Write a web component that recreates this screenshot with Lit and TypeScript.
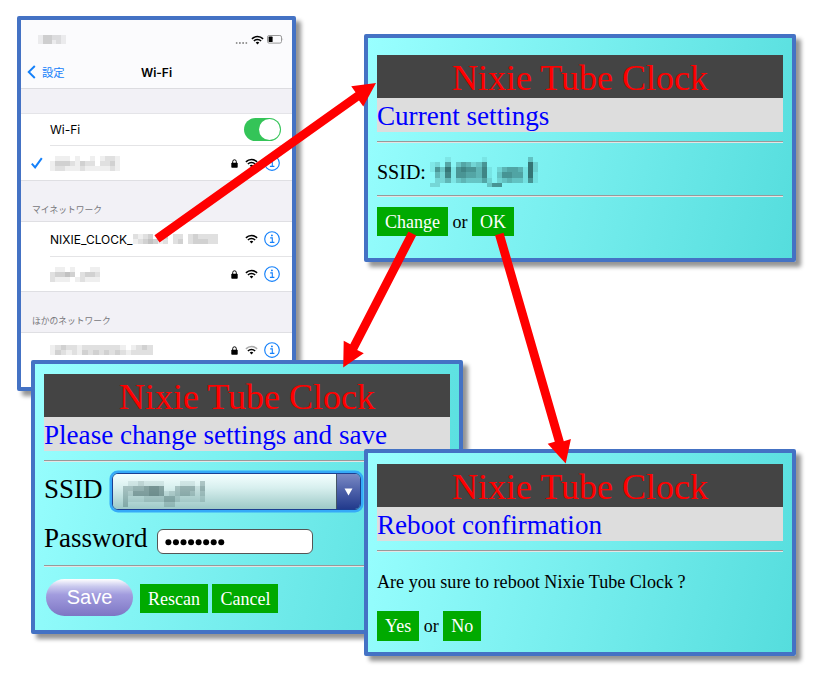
import { LitElement, html, svg, css } from "lit";
import { customElement, property } from "lit/decorators.js";

type Pt = [number, number];

/** Censored text: a grid of translucent cells, one digit (0-9) per cell. */
@customElement("mosaic-text")
class MosaicText extends LitElement {
  @property({ type: Array }) rows: string[] = [];
  @property({ type: Number }) cell = 5;
  @property() tone = "#666";
  static styles = css`
    :host { display: block; }
    svg { display: block; filter: blur(0.4px); }
  `;
  render() {
    const c = this.cell;
    const w = Math.max(...this.rows.map((r) => r.length)) * c;
    const h = this.rows.length * c;
    return html`<svg width=${w} height=${h} shape-rendering="crispEdges" fill=${this.tone}>
      ${this.rows.map((r, y) =>
        [...r].map((d, x) =>
          d === "0" || d === " "
            ? null
            : svg`<rect x=${x * c} y=${y * c} width=${c} height=${c} opacity=${Number(d) / 10}></rect>`
        )
      )}
    </svg>`;
  }
}

const wifi = (weak = false) => html`<svg class="wifi" width="13" height="10" viewBox="0 0 13 10" fill="none" stroke="#000" stroke-width="1.5">
  <path d="M0.9 3.9 A8 8 0 0 1 12.1 3.9" stroke=${weak ? "#aaa" : "#000"}></path>
  <path d="M2.9 6 A5.1 5.1 0 0 1 10.1 6"></path>
  <path d="M4.7 7.6 A2.6 2.6 0 0 1 8.3 7.6 L6.5 9.5 Z" fill="#000" stroke="none"></path>
</svg>`;

const lock = html`<svg class="lock" width="7" height="9" viewBox="0 0 7 9">
  <rect x="0.3" y="3.7" width="6.4" height="5" rx="0.8"></rect>
  <path d="M1.7 4.2 V2.6 A1.8 1.8 0 0 1 5.3 2.6 V4.2" fill="none" stroke="#000" stroke-width="1"></path>
</svg>`;

const info = html`<svg class="info" width="16" height="16" viewBox="0 0 16 16" fill="none" stroke="#1480fa">
  <circle cx="8" cy="8" r="7.3" stroke-width="1.15"></circle>
  <circle cx="7.9" cy="4.4" r="0.95" fill="#1480fa" stroke="none"></circle>
  <path d="M6.2 6.9 H8.3 V11.4 M5.9 11.4 H10.4" stroke-width="1.1"></path>
</svg>`;

@customElement("wifi-phone")
class WifiPhone extends LitElement {
  static styles = css`
    :host { display: flex; flex-direction: column; height: 100%; overflow: hidden; background: #fff; color: #000;
      font-family: Inter, "Noto Sans CJK JP", sans-serif; font-size: 12px; }
    :host > * { flex: none; }
    .top { background: #fbfbfd; border-bottom: 1px solid #dcdce0; height: 68px; box-sizing: content-box; }
    .status { height: 39px; display: flex; align-items: center; padding: 0 8px 0 17px; }
    .dots { margin-left: auto; width: 13px; height: 2px; margin-top: 7px; margin-right: 3px;
      background: radial-gradient(circle, #999 0.8px, transparent 1.1px) 0 0 / 3.25px 2px; }
    .battery { margin-left: 3px; }
    .nav { display: grid; grid-template-columns: 1fr auto 1fr; align-items: center; height: 26px; padding: 0 6px; }
    .back { display: flex; align-items: center; gap: 6px; color: #1480fa; font-size: 11.3px; }
    .title { font-weight: 600; font-size: 12px; }
    .gap { height: 24px; background: #f2f1f6; border-bottom: 1px solid #e4e4e8; }
    .section { height: 42px; background: #f2f1f6; border-top: 1px solid #dfdfe3; border-bottom: 1px solid #dfdfe3;
      box-sizing: border-box; padding: 17px 0 0 11px; font-size: 8.75px; line-height: 24px; color: #77777b; }
    .row { display: flex; align-items: center; height: 34px; box-sizing: border-box; padding-right: 12px; }
    .first { height: 31px; padding-right: 11px; }
    .mark { width: 29px; display: flex; padding-left: 10px; box-sizing: border-box; flex: none; }
    .mark svg { flex: none; }
    .line { height: 1px; margin-left: 29px; background: #e4e4e6; }
    .end { margin-left: auto; display: flex; align-items: center; }
    .lock { margin-right: 7px; }
    .info { margin-left: 6px; }
    .wifi { display: block; }
    .toggle { width: 37px; height: 23px; border-radius: 12px; background: #34c458; margin-left: auto; display: flex;
      justify-content: flex-end; padding: 1px; box-sizing: border-box; }
    .knob { width: 21px; height: 21px; border-radius: 50%; background: #fff; }
  `;
  render() {
    return html`
      <div class="top">
        <div class="status">
          <mosaic-text .cell=${4.6} .rows=${["133221", "133121"]}></mosaic-text>
          <span class="dots"></span>${wifi()}
          <svg class="battery" width="17" height="9" viewBox="0 0 17 9">
            <rect x="0.5" y="0.5" width="14" height="7.6" rx="1.6" fill="none" stroke="#999"></rect>
            <rect x="1.6" y="1.6" width="4" height="5.4" rx="0.6"></rect>
            <path d="M15.6 3 Q16.8 4.3 15.6 5.6 Z" fill="#999"></path>
          </svg>
        </div>
        <div class="nav">
          <span class="back"><svg width="9" height="14" viewBox="0 0 9 14" fill="none" stroke="#1480fa" stroke-width="1.9"><path d="M7.8 1 L1.7 7 L7.8 13"></path></svg>設定</span>
          <span class="title">Wi-Fi</span>
        </div>
      </div>
      <div class="gap"></div>
      <div class="row first"><span class="mark"></span>Wi-Fi<span class="toggle"><span class="knob"></span></span></div>
      <div class="line"></div>
      <div class="row"><span class="mark"><svg width="12" height="12" viewBox="0 0 12 12" fill="none" stroke="#1480fa" stroke-width="2"><path d="M0.8 6.6 L4.1 10.4 L10.8 1.2"></path></svg></span>
        <mosaic-text .cell=${5} .rows=${["01110100101221", "13332132202231", "12211121111121"]}></mosaic-text>
        <span class="end">${lock}${wifi()}${info}</span></div>
      <div class="section">マイネットワーク</div>
      <div class="row"><span class="mark"></span>NIXIE_CLOCK_
        <mosaic-text .cell=${5} .rows=${["212301302202322220", "123431202302333220"]}></mosaic-text>
        <span class="end">${wifi()}${info}</span></div>
      <div class="line"></div>
      <div class="row"><span class="mark"></span>
        <mosaic-text .cell=${5} .rows=${["0110100011", "2334302332", "2111012111"]}></mosaic-text>
        <span class="end">${lock}${wifi()}${info}</span></div>
      <div class="section">ほかのネットワーク</div>
      <div class="row"><span class="mark"></span>
        <mosaic-text .cell=${5.4} .rows=${["12322122222221012320", "13212132323232122220"]}></mosaic-text>
        <span class="end">${lock}${wifi(true)}${info}</span></div>
    `;
  }
}

const pageStyles = css`
  :host { display: block; height: 100%; box-sizing: border-box; padding: 0 9px;
    background: linear-gradient(104deg, #9ff 0%, #5dd 100%);
    font-family: "Liberation Serif", serif; color: #000; font-size: 18px; }
  .head { height: 43px; line-height: 46px; background: #444; color: #f00; font-size: 36px; text-align: center; white-space: nowrap; }
  .sub { height: 34px; line-height: 36px; background: #ddd; color: #00f; font-size: 27.1px; white-space: nowrap; }
  .rule { height: 2px; box-sizing: border-box; border-top: 1px solid #999; border-bottom: 1px solid #e4e4e4; }
  .first { margin-top: 9px; }
  .actions { display: flex; align-items: center; }
  .btn { background: #0a0; color: #fff; height: 29px; line-height: 30px; padding: 0 8px; white-space: nowrap; }
  .or { padding: 1px 4.5px 0; }
`;

const banner = (title: string) => html`
  <div class="head">Nixie Tube Clock</div>
  <div class="sub">${title}</div>
  <div class="rule first"></div>`;

@customElement("current-page")
class CurrentPage extends LitElement {
  static styles = [pageStyles, css`
    :host { padding-top: 17px; }
    .ssid { display: flex; align-items: center; height: 52px; padding-top: 6px; box-sizing: border-box; font-size: 20px; gap: 4px; }
    .actions { margin-top: 10px; }
  `];
  render() {
    return html`${banner("Current settings")}
      <div class="ssid">SSID:<mosaic-text .cell=${5.15} tone="#255" .rows=${[
        "000100000010000000030",
        "120503542360000000082",
        "163816766471024554182",
        "042716655471036655181",
        "022413433352023433161",
        "220000000003660000000"]}></mosaic-text></div>
      <div class="rule"></div>
      <div class="actions"><span class="btn">Change</span><span class="or">or</span><span class="btn">OK</span></div>`;
  }
}

@customElement("change-page")
class ChangePage extends LitElement {
  static styles = [pageStyles, css`
    :host { padding-top: 10px; }
    .field { display: flex; font-size: 27px; white-space: nowrap; }
    .label { line-height: 33px; }
    .ssid { margin-top: 11px; height: 49px; }
    .ssid .label { margin-right: 9.5px; }
    .select { flex: none; display: flex; width: 249px; height: 37px; box-sizing: border-box; border: 1px solid #1b3f92; border-radius: 6px;
      box-shadow: 0 0 0 2.5px #35aaf8; overflow: hidden; }
    .value { flex: 1; padding: 7px 0 0 10px; background: linear-gradient(#f4ffff, #d7efee 40%, #9dc9c7); border-right: 1px solid #456; }
    .drop { width: 23px; background: linear-gradient(#7b8ac4, #4b5fa8 50%, #223a8c); display: grid; place-items: center; }
    .pwd { height: 43px; }
    .pwd .label { line-height: 32px; }
    .input { width: 156px; height: 25px; box-sizing: border-box; border: 1.4px solid #555; border-radius: 6px; background: #fff;
      margin: 7px 0 0 9px; display: flex; align-items: center; padding-left: 7px; }
    .actions { margin-top: 12px; padding-left: 2px; }
    .save { width: 87px; height: 37px; line-height: 37px; border-radius: 19px; text-align: center; color: #fff; margin-right: 7px;
      font-family: "Liberation Sans", sans-serif; font-size: 20px;
      background: linear-gradient(#fff 0%, #c9c9ee 20%, #a29cde 42%, #7d76c4 100%); }
    .btn + .btn { margin-left: 4.5px; }
    .actions .btn { position: relative; top: 0.5px; }
  `];
  render() {
    return html`${banner("Please change settings and save")}
      <div class="field ssid"><span class="label">SSID</span>
        <span class="select"><span class="value"><mosaic-text .cell=${5.15} tone="#355" .rows=${[
          "0112111100011103",
          "3344566500344414",
          "3255566512344313",
          "3111222244211112",
          "3000000022000000"]}></mosaic-text></span>
          <span class="drop"><svg width="9" height="8"><path d="M0.5 0.5 H8.5 L4.5 7.5 Z" fill="#fff"></path></svg></span></span></div>
      <div class="field pwd"><span class="label">Password</span>
        <span class="input"><svg width="62" height="8">${Array.from({ length: 8 }, (_, i) => svg`<circle cx=${3.4 + i * 7.55} cy="4.2" r="3"></circle>`)}</svg></span></div>
      <div class="rule"></div>
      <div class="actions"><span class="save">Save</span><span class="btn">Rescan</span><span class="btn">Cancel</span></div>`;
  }
}

@customElement("reboot-page")
class RebootPage extends LitElement {
  static styles = [pageStyles, css`
    :host { padding-top: 11px; }
    .ask { margin-top: 19px; line-height: 22px; font-size: 18.1px; }
    .actions { margin-top: 18px; }
    .btn { height: 30px; }
  `];
  render() {
    return html`${banner("Reboot confirmation")}
      <div class="ask">Are you sure to reboot Nixie Tube Clock ?</div>
      <div class="actions"><span class="btn">Yes</span><span class="or">or</span><span class="btn">No</span></div>`;
  }
}

const ARROWS: Pt[][] = [
  [[157, 238.8], [376, 83]],
  [[412.3, 233.5], [343.2, 367.5]],
  [[499.3, 234], [565.7, 463.5]],
];

@customElement("app-root")
class AppRoot extends LitElement {
  static styles = css`
    :host { display: block; position: relative; width: 819px; height: 679px; background: #fff; overflow: hidden; }
    .win { position: absolute; box-sizing: border-box; border: 4px solid #4472c4; border-radius: 2px; width: 432px;
      box-shadow: 5px 5px 4px rgba(0, 0, 0, 0.42); }
    .phone { left: 17px; top: 16px; width: 279px; height: 375px; }
    .current { left: 364px; top: 34px; height: 228px; }
    .change { left: 31px; top: 360px; height: 274px; }
    .reboot { left: 364px; top: 449px; height: 207px; }
    .arrows { position: absolute; inset: 0; }
  `;
  arrow([[x1, y1], [x2, y2]]: Pt[]) {
    const len = Math.hypot(x2 - x1, y2 - y1);
    const deg = (Math.atan2(y2 - y1, x2 - x1) * 180) / Math.PI;
    return svg`<path transform="translate(${x1} ${y1}) rotate(${deg})"
      d="M0 -4.4 H${len - 22} V-11.8 L${len} 0 L${len - 24} 11.8 V4.4 H0 Z"></path>`;
  }
  render() {
    return html`
      <div class="win phone"><wifi-phone></wifi-phone></div>
      <div class="win current"><current-page></current-page></div>
      <div class="win change"><change-page></change-page></div>
      <div class="win reboot"><reboot-page></reboot-page></div>
      <svg class="arrows" width="819" height="679" fill="#f00">${ARROWS.map((a) => this.arrow(a))}</svg>
    `;
  }
}
